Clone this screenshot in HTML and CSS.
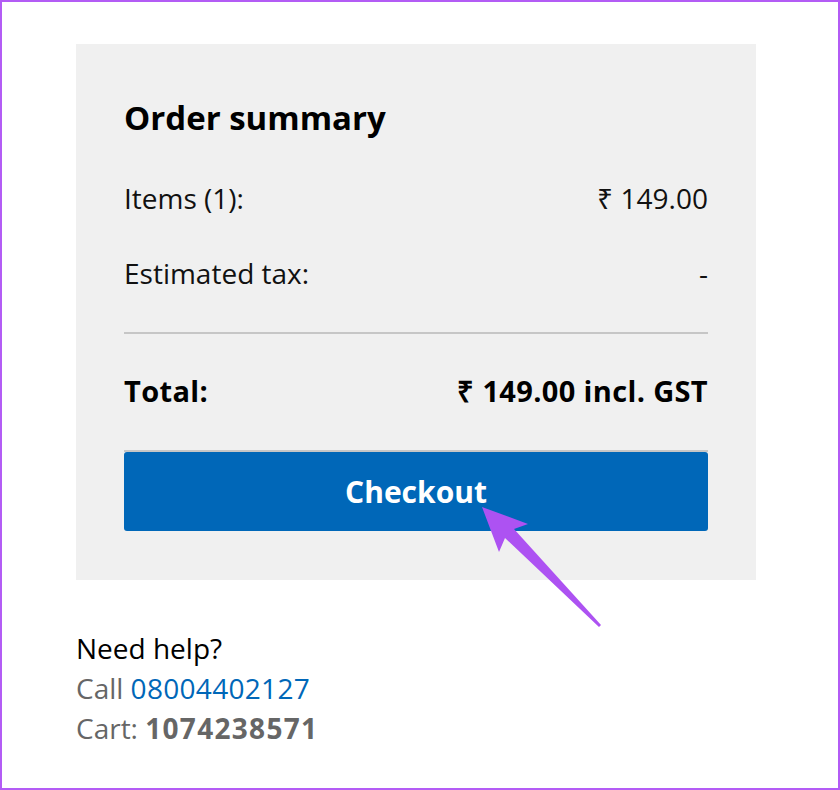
FILE: index.html
```html
<!DOCTYPE html>
<html lang="en">
<head>
  <meta charset="UTF-8">
  <title>Order summary</title>
  <link rel="stylesheet" href="styles.css">
</head>
<body>
  <div class="frame">
    <div class="summary">
      <h2>Order summary</h2>
      <div class="row">
        <span>Items (1):</span>
        <span>₹ 149.00</span>
      </div>
      <div class="row tax">
        <span>Estimated tax:</span>
        <span>-</span>
      </div>
      <hr>
      <div class="row total">
        <span>Total:</span>
        <span>₹ 149.00 incl. GST</span>
      </div>
      <button type="button" class="checkout">Checkout</button>
    </div>

    <div class="help">
      <div class="help-title">Need help?</div>
      <div>Call <a href="#">08004402127</a></div>
      <div>Cart: <b>1074238571</b></div>
    </div>

    <svg class="arrow" width="840" height="790" viewBox="0 0 840 790">
      <polygon points="482,507 528,524 514,529 601,625 599,627 505,538 499,552" fill="#ad52f2"/>
    </svg>
  </div>
</body>
</html>
```

FILE: styles.css
```css
body {
  margin: 0;
  font-family: "Open Sans", Arial, sans-serif;
  background: white;
}

.frame {
  position: relative;
  width: 840px;
  height: 790px;
  box-sizing: border-box;
  border: 2px solid #b35cf5;
  padding: 42px 0 0 74px;
}

.summary {
  width: 680px;
  height: 536px;
  box-sizing: border-box;
  background: #f0f0f0;
  padding: 50px 48px 0 48px;
}

h2 {
  margin: 0 0 36px;
  font-size: 33px;
  line-height: 48px;
  font-weight: bold;
  color: #000;
}

.row {
  display: flex;
  justify-content: space-between;
  font-size: 28px;
  line-height: 40px;
  height: 75px;
  color: #111;
}

.tax {
  height: 79px;
}

hr {
  border: none;
  border-top: 2px solid #c6c6c6;
  margin: 0 0 37px;
}

.total {
  font-size: 29px;
  letter-spacing: 0.35px;
  font-weight: bold;
  color: #000;
  height: 81px;
  border-bottom: 2px solid #c6c6c6;
  box-sizing: border-box;
}

.checkout {
  display: block;
  width: 100%;
  height: 79px;
  border: none;
  border-radius: 3px;
  background-color: #0067b8;
  color: white;
  font-family: inherit;
  font-size: 30px;
  font-weight: bold;
  cursor: pointer;
}

.help {
  margin: 48px 0 0 0;
  font-size: 28px;
  line-height: 40px;
  color: #666;
}

.help-title {
  color: #000;
}

.help a {
  color: #0067b8;
  letter-spacing: 0.3px;
  text-decoration: none;
}

.help b {
  letter-spacing: 1.3px;
}

.arrow {
  position: absolute;
  left: -2px;
  top: -2px;
}
```
